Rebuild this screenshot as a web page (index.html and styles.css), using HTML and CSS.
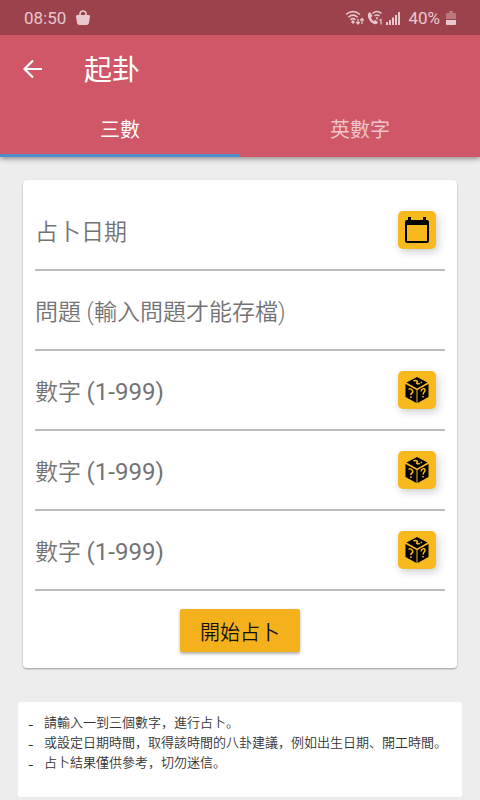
FILE: index.html
```html
<!DOCTYPE html>
<html lang="zh-Hans">
<head>
<meta charset="utf-8">
<meta name="viewport" content="width=device-width, initial-scale=1">
<title>起卦</title>
<link rel="stylesheet" href="styles.css">
</head>
<body>
<svg class="defs" aria-hidden="true">
  <symbol id="dice" viewBox="0 0 24 26">
    <path d="M12 0 22.500 5.500 12 11.500 1.500 5.500Z M.5 7 11.500 13V26L.5 20Z M23.500 7 12.500 13V26L23.500 20Z" fill="#000"/>
    <g fill="none" stroke="#f7b91c" stroke-width="1.500">
      <path d="M4 12.500C4 10.500 8 12.500 7.800 15C7.700 16.500 5.900 15.500 5.900 18M5.900 19.300V21"/>
      <path d="M16 14.500C16.200 12 20 10.500 20 13C20 15.200 18 15.200 18 17.500M18 19V20.600"/>
      <path d="M8.500 4.200C10.500 2.700 13.500 4 12 5.500C11 6.600 12.800 7.300 14.800 6.300M15.700 5.800 17 5.100"/>
    </g>
  </symbol>
</svg>
<header class="top">
  <div class="status">
    <div class="status-group">
      <span>08:50</span>
      <svg width="14" height="16" viewBox="0 0 14 16"><path d="M1 5H13Q14 5 14 6.500L13 13Q12.500 15 10.500 15H3.500Q1.500 15 1 13L0 6.500Q0 5 1 5Z" fill="currentColor"/><path d="M4 6V4Q4 1 7 1T10 4V6" fill="none" stroke="currentColor" stroke-width="1.500"/></svg>
    </div>
    <div class="status-group signals">
      <svg width="56" height="16" viewBox="0 0 56 16" fill="none" stroke="currentColor" stroke-width="1.500">
        <path d="M0 4.500Q7-1.500 14 4.500M2.300 7.200Q7 3 11.700 7.200M4.500 9.700Q7 7.500 9.500 9.700"/>
        <path d="M7 10 9 12 7 14 5 12Z" fill="currentColor" stroke="none"/>
        <path d="M12 9V14M10.300 12 12 14 13.700 12M16 14V8.500M14.300 10.500 16 8.500 17.700 10.500" stroke-width="1.200"/>
        <path d="M23 2.500C20.500 5 22.500 11 27 13.500C29.500 14.800 31 14 32 12.500L29.500 10 27.500 11C26 10 25.500 9 25 7.500L26.500 6 24.500 2.500Z" fill="currentColor" stroke="none"/>
        <path d="M26.500 3.500Q31-.5 35.500 3.500M28.500 6Q31 4 33.500 6M31 7V9.500" stroke-width="1.500"/>
        <path d="M33.500 10.500 35 9.500V14.500" stroke-width="1.200"/>
        <path d="M41 12V15M44 10V15M47 7.500V15M50 5V15M53 2V15" stroke-width="2"/>
      </svg>
      <span>40%</span>
      <svg width="10" height="16" viewBox="0 0 10 16" fill="currentColor"><path d="M3 1H7V3H9Q10 3 10 4V9H0V4Q0 3 1 3H3Z" opacity=".4"/><path d="M0 10H10V14Q10 15 9 15H1Q0 15 0 14Z"/></svg>
    </div>
  </div>
  <div class="appbar">
    <button class="back" type="button" aria-label="返回"><svg width="20" height="20" viewBox="0 0 20 20" fill="none" stroke="currentColor" stroke-width="2.200"><path d="M19 10H2M10 1.500 1.500 10 10 18.500"/></svg></button>
    <h1>起卦</h1>
  </div>
  <nav class="tabs">
    <a class="tab active" href="#numbers" aria-current="page">三數</a>
    <a class="tab" href="#alphanumeric">英數字</a>
  </nav>
</header>
<main>
  <form class="card">
    <div class="field">
      <label for="date">占卜日期</label><input id="date" type="text">
      <button class="tool" type="button" aria-label="選擇日期"><svg width="24" height="27" viewBox="0 0 24 27"><path d="M3 0H6V3H18V0H21V3H22Q24 3 24 5V24Q24 26 22 26H2Q0 26 0 24V5Q0 3 2 3H3Z M2 8V24H22V8Z" fill="#000" fill-rule="evenodd"/></svg></button>
    </div>
    <div class="field">
      <label for="question">問題 (輸入問題才能存檔)</label><input id="question" type="text">
    </div>
    <div class="field">
      <label for="n1">數字 <span class="range">(1-999)</span></label><input id="n1" type="text" inputmode="numeric">
      <button class="tool" type="button" aria-label="隨機數字"><svg width="24" height="26"><use href="#dice"/></svg></button>
    </div>
    <div class="field">
      <label for="n2">數字 <span class="range">(1-999)</span></label><input id="n2" type="text" inputmode="numeric">
      <button class="tool" type="button" aria-label="隨機數字"><svg width="24" height="26"><use href="#dice"/></svg></button>
    </div>
    <div class="field">
      <label for="n3">數字 <span class="range">(1-999)</span></label><input id="n3" type="text" inputmode="numeric">
      <button class="tool" type="button" aria-label="隨機數字"><svg width="24" height="26"><use href="#dice"/></svg></button>
    </div>
    <button class="submit" type="button">開始占卜</button>
  </form>
  <ul class="notes">
    <li>請輸入一到三個數字，進行占卜。</li>
    <li>或設定日期時間，取得該時間的八卦建議，例如出生日期、開工時間。</li>
    <li>占卜結果僅供參考，切勿迷信。</li>
  </ul>
</main>
</body>
</html>
```
FILE: styles.css
```css
* {
  box-sizing: border-box;
}

body {
  margin: 0;
  background: #ededed;
  font-family: Roboto, "Noto Sans CJK SC", sans-serif;
}

button,
input {
  border: 0;
  padding: 0;
  font: inherit;
}

.defs {
  position: absolute;
  width: 0;
  height: 0;
}

.top {
  background: #cf5767;
  color: #fff;
  box-shadow: 0 2px 5px rgba(0, 0, 0, 0.4);
}

.status {
  display: flex;
  justify-content: space-between;
  align-items: center;
  height: 35px;
  padding: 0 24px;
  background: #9b424d;
  color: #e8c8cd;
  font-size: 17px;
}

.status-group {
  display: flex;
  align-items: center;
  gap: 10px;
}

.signals {
  gap: 6px;
}

.appbar {
  display: flex;
  align-items: center;
  gap: 41px;
  height: 67px;
  padding: 0 23px;
}

.back {
  display: flex;
  background: none;
  color: #fff;
}

h1 {
  margin: 0;
  padding-top: 4px;
  font-size: 28px;
  font-weight: 400;
  line-height: 40px;
}

.tabs {
  display: flex;
}

.tab {
  flex: 1;
  height: 55px;
  border-bottom: 3px solid transparent;
  color: #efc3c9;
  font-size: 20px;
  line-height: 56px;
  text-align: center;
  text-decoration: none;
}

.tab.active {
  border-color: #4d8fc4;
  color: #fff;
}

main {
  padding: 23px 18px 3px;
}

.card {
  margin: 0 5px 34px;
  padding: 11px 12px 16px;
  border-radius: 4px;
  background: #fff;
  box-shadow: 0 1px 2px rgba(0, 0, 0, 0.35);
}

.field {
  display: flex;
  align-items: center;
  height: 80px;
  padding-right: 9px;
  border-bottom: 2px solid #bdbdbd;
  color: #737373;
  font-size: 23px;
  font-weight: 350;
}

.range {
  font-size: 24px;
  font-weight: 400;
}

.field input {
  flex: 1;
  min-width: 0;
  height: 40px;
  background: transparent;
  outline: 0;
}

.tool {
  display: flex;
  align-items: center;
  justify-content: center;
  width: 38px;
  height: 38px;
  border-radius: 5px;
  background: #f7b91c;
  box-shadow: 2px 3px 8px rgba(0, 0, 0, 0.2);
}

.submit {
  display: block;
  width: 120px;
  height: 43px;
  margin: 18px auto 0;
  padding-top: 2px;
  border-radius: 2px;
  background: #f4b11b;
  color: #111;
  font-size: 20px;
  font-weight: 350;
  box-shadow: 0 2px 3px rgba(0, 0, 0, 0.3);
}

.notes {
  margin: 0;
  padding: 11px 10px 24px;
  border-radius: 3px;
  background: #fff;
  color: #333;
  font-size: 13px;
  font-weight: 350;
  line-height: 20px;
  list-style: none;
}

.notes li {
  display: flex;
}

.notes li::before {
  content: "-";
  flex: none;
  width: 16px;
  font-family: "Noto Sans CJK SC", sans-serif;
  font-size: 16px;
}
```
